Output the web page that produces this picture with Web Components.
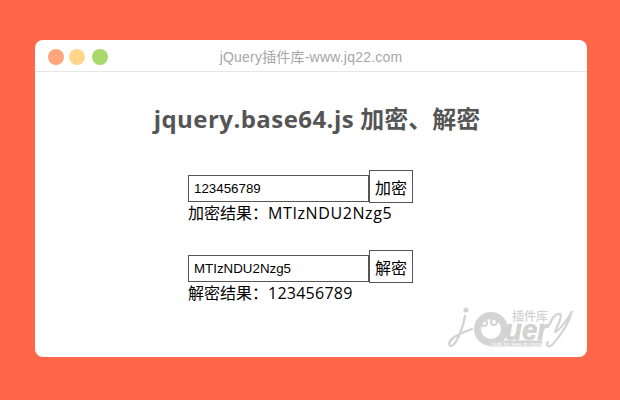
<!DOCTYPE html>
<html lang="zh">
<head>
<meta charset="utf-8">
<title>jquery.base64.js</title>
<style>
	html, body { margin: 0; height: 100%; }
	body {
		background: #ff674a;
		font-family: "Open Sans", "Noto Sans CJK SC", sans-serif;
	}
</style>
</head>
<body>
<demo-window heading="jQuery插件库-www.jq22.com">
	<h1 slot="title"><span style="letter-spacing: .45px">jquery.base64.js</span> 加密、解密</h1>
	<crypt-row style="--track: .6px" value="123456789" action="加密" label="加密结果：" result="MTIzNDU2Nzg5"></crypt-row>
	<crypt-row style="--track: .25px" value="MTIzNDU2Nzg5" action="解密" label="解密结果：" result="123456789"></crypt-row>
	<site-logo slot="logo"></site-logo>
</demo-window>

<script>
const html = String.raw;

const windowTemplate = document.createElement("template");
windowTemplate.innerHTML = html`
	<style>
		:host {
			display: flex;
			flex-direction: column;
			position: relative;
			box-sizing: border-box;
			width: 552px;
			height: 317px;
			margin: 40px 0 0 35px;
			background: #fff;
			border-radius: 8px;
			overflow: hidden;
		}
		.bar {
			position: relative;
			display: flex;
			align-items: center;
			justify-content: center;
			flex: none;
			height: 31px;
			border-bottom: 1px solid #e6e6e6;
			color: #a6a6a6;
			font: 14px "Liberation Sans", "Noto Sans CJK SC", sans-serif;
			letter-spacing: .2px;
		}
		.dots {
			position: absolute;
			left: 13px;
			top: 9px;
			display: flex;
			gap: 5px;
		}
		.dots i {
			width: 16px;
			height: 16px;
			border-radius: 50%;
		}
		.dots i:nth-child(1) { background: #ffa67e; }
		.dots i:nth-child(2) { background: #ffd68a; }
		.dots i:nth-child(3) { background: #a9d86c; margin-left: 2px; }
		::slotted(h1) {
			margin: 30px 0 0;
			padding-left: 12px;
			color: #555;
			font-size: 24px;
			line-height: 34px;
			font-weight: 700;
			text-align: center;
		}
		.rows {
			display: flex;
			flex-direction: column;
			gap: 25px;
			margin: 34px 0 0 153px;
		}
	</style>
	<div class="bar">
		<div class="dots"><i></i><i></i><i></i></div>
		<span id="heading"></span>
	</div>
	<slot name="title"></slot>
	<div class="rows"><slot></slot></div>
	<slot name="logo"></slot>
`;

class DemoWindow extends HTMLElement {
	constructor() {
		super();
		this.attachShadow({ mode: "open" });
		this.shadowRoot.appendChild(windowTemplate.content.cloneNode(true));
	}

	connectedCallback() {
		this.shadowRoot.getElementById("heading").textContent = this.getAttribute("heading");
	}
}

const rowTemplate = document.createElement("template");
rowTemplate.innerHTML = html`
	<style>
		:host {
			display: block;
			color: #000;
			font-size: 16px;
		}
		.line {
			display: flex;
			align-items: flex-end;
		}
		input {
			box-sizing: border-box;
			width: 181px;
			height: 27px;
			margin: 0 0 1px;
			padding: 0 5px;
			border: 1px solid #555;
			background: #fff;
			color: #000;
			font: 13.33px "Liberation Sans", sans-serif;
			outline: none;
		}
		button {
			box-sizing: border-box;
			width: 44px;
			height: 33px;
			padding: 0;
			border: 1px solid #555;
			background: #fff;
			color: #000;
			font: 16px "Noto Sans CJK SC", sans-serif;
		}
		p {
			margin: 0;
			height: 22px;
			line-height: 20px;
		}
		#result { letter-spacing: var(--track, 0); }
	</style>
	<div class="line">
		<input type="text">
		<button type="button"></button>
	</div>
	<p><span id="label"></span><span id="result"></span></p>
`;

class CryptRow extends HTMLElement {
	constructor() {
		super();
		this.attachShadow({ mode: "open" });
		this.shadowRoot.appendChild(rowTemplate.content.cloneNode(true));
	}

	connectedCallback() {
		const root = this.shadowRoot;
		root.querySelector("input").setAttribute("value", this.getAttribute("value"));
		root.querySelector("button").textContent = this.getAttribute("action");
		root.getElementById("label").textContent = this.getAttribute("label");
		root.getElementById("result").textContent = this.getAttribute("result");
	}
}

const logoTemplate = document.createElement("template");
logoTemplate.innerHTML = html`
	<style>
		:host {
			position: absolute;
			left: 410px;
			top: 264px;
			display: block;
			width: 135px;
			height: 48px;
		}
		svg { display: block; }
		text { fill: #d2d2d2; }
		.line { fill: none; stroke: #d4d4d4; stroke-linecap: round; }
	</style>
	<svg width="135" height="48" viewBox="0 0 135 48">
		<!-- j -->
		<circle cx="21" cy="6" r="2.6" fill="#d4d4d4"/>
		<path class="line" stroke-width="2.4" d="M20 12C18 24 12 38 8 41C3 44 3 38 8 34C13 30 20 28 27 25"/>
		<!-- sheep head -->
		<circle cx="46" cy="25" r="13.5" fill="#fff" stroke="#d4d4d4" stroke-width="7"/>
		<circle cx="39" cy="19" r="3" class="line" stroke-width="2"/>
		<circle cx="49" cy="18" r="3" class="line" stroke-width="2"/>
		<!-- y -->
		<path class="line" stroke-width="2.2" d="M105 20C107 12 113 9 115 10C118 12 112 22 110 28C113 28 124 14 127 7C124 20 115 32 108 40C104 44 100 42 103 38"/>
		<text x="67" y="17" font-size="12" font-weight="500" font-family="'Noto Sans CJK SC', sans-serif">插件库</text>
		<text x="60" y="36" font-size="30" font-weight="700" font-style="italic" textLength="43" lengthAdjust="spacingAndGlyphs" stroke="#d2d2d2" stroke-width=".6" font-family="'Liberation Sans', sans-serif">uer</text>
		<rect x="45" y="36.5" width="52" height="6" rx="1" fill="#d4d4d4"/>
		<text x="47" y="41.5" font-size="5.5" style="fill:#fff" font-family="'Liberation Sans', sans-serif">look for less do more</text>
	</svg>
`;

class SiteLogo extends HTMLElement {
	constructor() {
		super();
		this.attachShadow({ mode: "open" });
		this.shadowRoot.appendChild(logoTemplate.content.cloneNode(true));
	}
}

customElements.define("demo-window", DemoWindow);
customElements.define("crypt-row", CryptRow);
customElements.define("site-logo", SiteLogo);
</script>
</body>
</html>
